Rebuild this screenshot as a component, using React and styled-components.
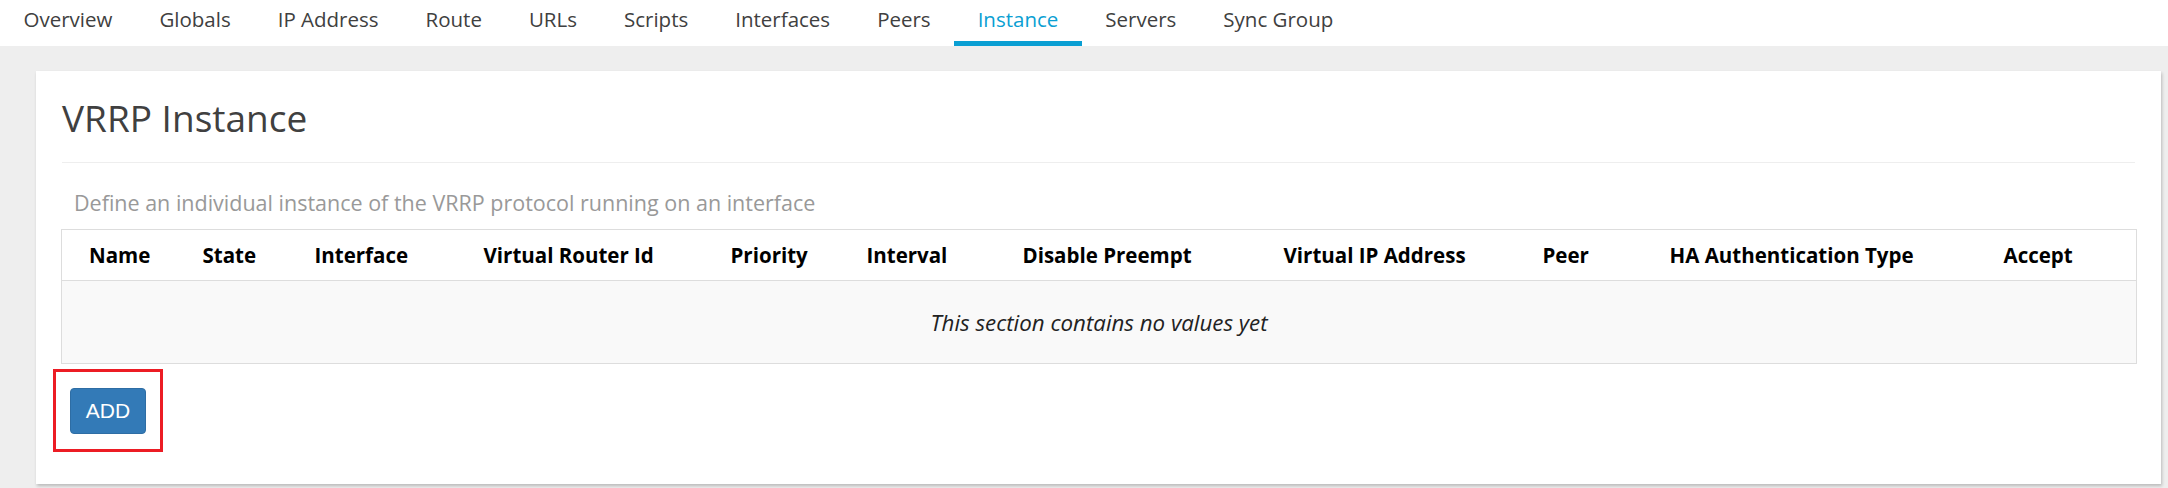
import React from "react";
import styled, { createGlobalStyle } from "styled-components";

const GlobalStyle = createGlobalStyle`
  html, body {
    margin: 0;
    padding: 0;
    background: #eeeeee;
  }
  body {
    font-family: "Open Sans", "Noto Sans", sans-serif;
    color: #404040;
  }
  * { box-sizing: border-box; }
`;

const Page = styled.div`
  width: 2168px;
  min-height: 488px;
  background: #eeeeee;
`;

const TabBar = styled.nav`
  display: flex;
  align-items: stretch;
  height: 46px;
  background: #ffffff;
`;

const Tab = styled.a`
  display: flex;
  align-items: center;
  padding: 0 23.5px 4px;
  font-size: 20.5px;
  color: ${(p) => (p.$active ? "#0a9fd3" : "#404040")};
  border-bottom: 5px solid ${(p) => (p.$active ? "#0a9fd3" : "transparent")};
  text-decoration: none;
  cursor: pointer;
  white-space: nowrap;
`;

const Content = styled.main`
  padding: 25px 7px 0 36px;
`;

const Card = styled.section`
  background: #ffffff;
  padding: 25px 26px 32px;
  box-shadow: 1px 2px 3px rgba(0, 0, 0, 0.22);
`;

const Title = styled.h2`
  margin: 0;
  font-size: 37px;
  line-height: 44px;
  font-weight: 400;
  color: #404040;
`;

const Rule = styled.hr`
  margin: 22px 0 0;
  border: 0;
  border-top: 1px solid #eeeeee;
`;

const Description = styled.p`
  margin: 26px 0 0;
  padding-left: 12px;
  font-size: 21.5px;
  line-height: 28px;
  color: #999999;
`;

const Table = styled.table`
  width: calc(100% + 1px);
  margin: 12px 0 0 -1px;
  border-collapse: collapse;
  table-layout: fixed;
  border: 1px solid #dddddd;
`;

const HeadCell = styled.th`
  height: 51px;
  padding: 0 0 0 12px;
  text-align: left;
  vertical-align: middle;
  font-size: 20.5px;
  font-weight: 700;
  color: #000000;
  white-space: nowrap;
  border-bottom: 1px solid #dddddd;
  background: #ffffff;

  &:first-child {
    padding-left: 27px;
  }
`;

const EmptyCell = styled.td`
  height: 83px;
  text-align: center;
  vertical-align: middle;
  font-size: 22.3px;
  font-style: italic;
  color: #222222;
  background: #f9f9f9;
`;

const Actions = styled.div`
  display: flex;
  margin: 5px 0 0 -9px;
`;

const Highlight = styled.div`
  display: inline-flex;
  padding: 16px 14px 15px;
  border: 3px solid #ec1c24;
`;

const Button = styled.button`
  width: 76px;
  height: 46px;
  padding: 0;
  border: 1px solid #2e6da4;
  border-radius: 4px;
  background: #337ab7;
  color: #ffffff;
  font-family: "Liberation Sans", Arial, sans-serif;
  font-size: 21px;
  cursor: pointer;
`;

const tabs = [
  "Overview",
  "Globals",
  "IP Address",
  "Route",
  "URLs",
  "Scripts",
  "Interfaces",
  "Peers",
  "Instance",
  "Servers",
  "Sync Group",
];

const columns = [
  { label: "Name", width: 129 },
  { label: "State", width: 112 },
  { label: "Interface", width: 169 },
  { label: "Virtual Router Id", width: 247 },
  { label: "Priority", width: 136 },
  { label: "Interval", width: 156 },
  { label: "Disable Preempt", width: 261 },
  { label: "Virtual IP Address", width: 259 },
  { label: "Peer", width: 127 },
  { label: "HA Authentication Type", width: 334 },
  { label: "Accept", width: 145 },
];

export default function App() {
  return (
    <Page>
      <GlobalStyle />
      <TabBar>
        {tabs.map((t) => (
          <Tab key={t} $active={t === "Instance"}>
            {t}
          </Tab>
        ))}
      </TabBar>
      <Content>
        <Card>
          <Title>VRRP Instance</Title>
          <Rule />
          <Description>
            Define an individual instance of the VRRP protocol running on an interface
          </Description>
          <Table>
            <colgroup>
              {columns.map((c) => (
                <col key={c.label} style={{ width: `${c.width}px` }} />
              ))}
            </colgroup>
            <thead>
              <tr>
                {columns.map((c) => (
                  <HeadCell key={c.label}>{c.label}</HeadCell>
                ))}
              </tr>
            </thead>
            <tbody>
              <tr>
                <EmptyCell colSpan={columns.length}>
                  This section contains no values yet
                </EmptyCell>
              </tr>
            </tbody>
          </Table>
          <Actions>
            <Highlight>
              <Button>ADD</Button>
            </Highlight>
          </Actions>
        </Card>
      </Content>
    </Page>
  );
}
